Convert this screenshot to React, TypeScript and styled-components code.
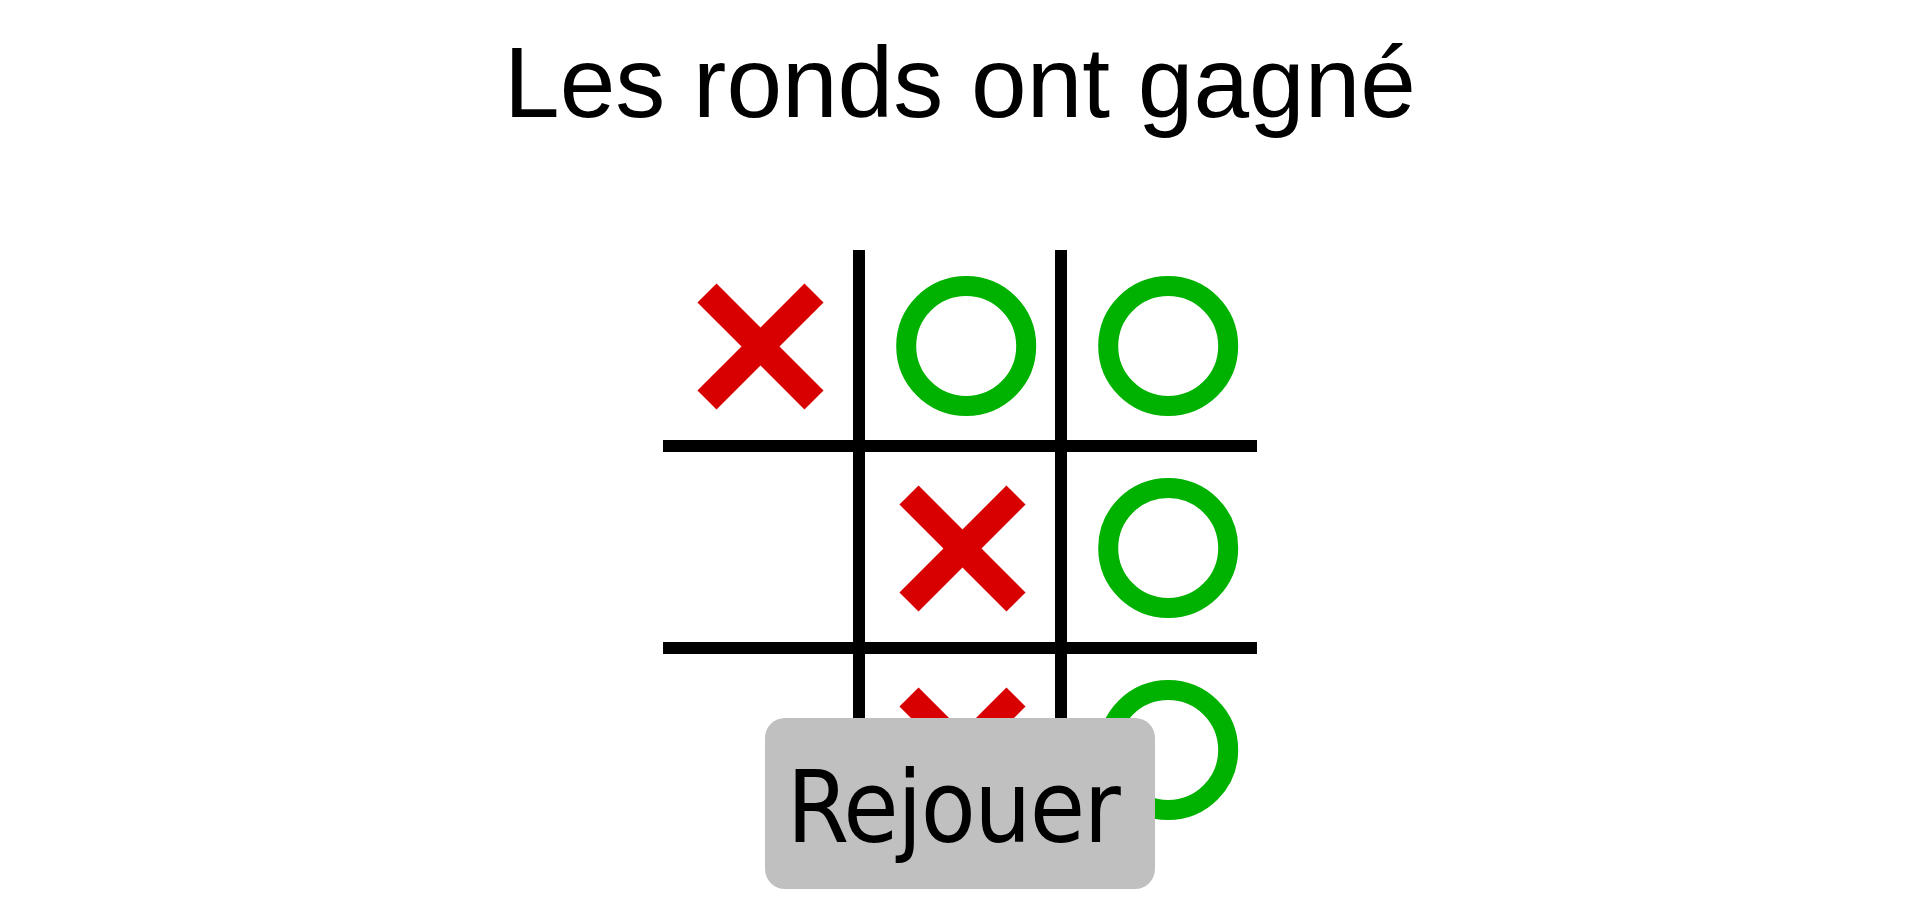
import React from "react";
import styled, { createGlobalStyle } from "styled-components";

const GlobalStyle = createGlobalStyle`
  html, body {
    margin: 0;
    padding: 0;
    background: #ffffff;
  }
  body {
    font-family: "Liberation Sans", Arial, sans-serif;
  }
`;

const Page = styled.main`
  display: flex;
  flex-direction: column;
  align-items: center;
  padding-top: 25px;
  min-height: 888px;
`;

const Title = styled.h1`
  margin: 0;
  font-family: "Liberation Sans", Arial, sans-serif;
  font-weight: 400;
  font-size: 100px;
  line-height: 115px;
  color: #000000;
`;

const Stage = styled.section`
  margin-top: 110px;
  display: flex;
  flex-direction: column;
  align-items: center;
`;

const Board = styled.div`
  display: grid;
  grid-template-columns: repeat(3, 190px);
  grid-template-rows: repeat(3, 190px);
  gap: 12px;
  background: #000000;
`;

const Cell = styled.div`
  background: #ffffff;
  width: 190px;
  height: 190px;
`;

const ReplayButton = styled.button`
  position: relative;
  z-index: 1;
  margin-top: -126px;
  width: 390px;
  height: 171px;
  border: none;
  border-radius: 20px;
  background: #c0c0c0;
  color: #000000;
  font-family: "DejaVu Sans Condensed", "DejaVu Sans", sans-serif;
  font-size: 100px;
  letter-spacing: -1.5px;
  display: flex;
  align-items: center;
  justify-content: center;
  padding: 8px 14px 0 0;
  cursor: pointer;
`;

type Mark = "X" | "O" | null;

const board: Mark[] = ["X", "O", "O", null, "X", "O", null, "X", "O"];

const Cross = () => (
  <svg width="190" height="190" viewBox="0 0 190 190">
    <g stroke="#d80000" strokeWidth="27" strokeLinecap="butt">
      <line x1="44" y1="43" x2="151" y2="150" />
      <line x1="151" y1="43" x2="44" y2="150" />
    </g>
  </svg>
);

const Ring = () => (
  <svg width="190" height="190" viewBox="0 0 190 190">
    <circle cx="101.2" cy="96" r="60" fill="none" stroke="#00b200" strokeWidth="20" />
  </svg>
);

export default function App() {
  return (
    <>
      <GlobalStyle />
      <Page>
        <Title>Les ronds ont gagné</Title>
        <Stage>
          <Board>
            {board.map((m, i) => (
              <Cell key={i}>{m === "X" ? <Cross /> : m === "O" ? <Ring /> : null}</Cell>
            ))}
          </Board>
          <ReplayButton>Rejouer</ReplayButton>
        </Stage>
      </Page>
    </>
  );
}
